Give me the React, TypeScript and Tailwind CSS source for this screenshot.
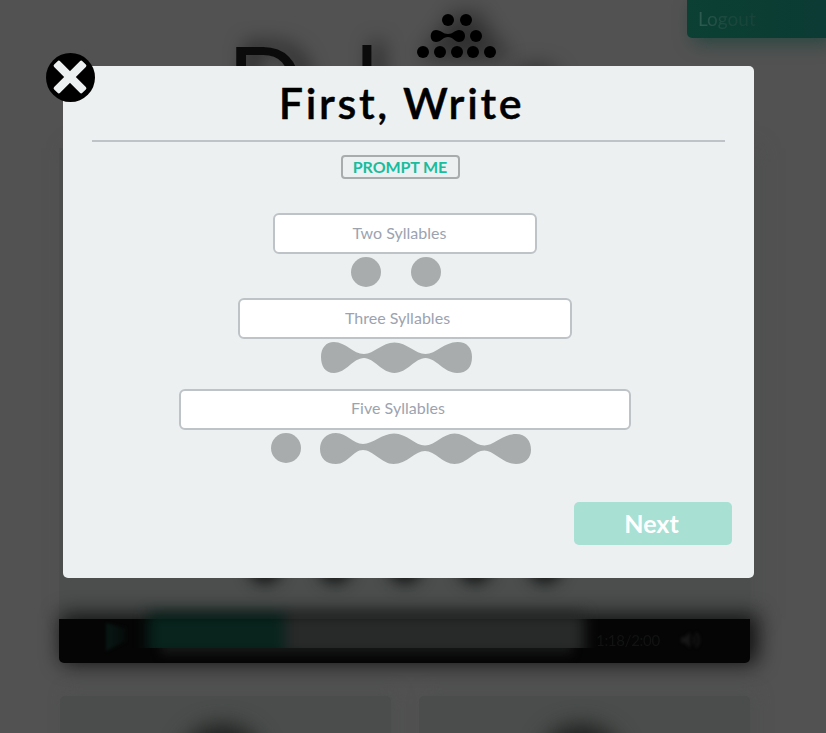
import React from "react";

const field =
  "block h-[41px] rounded-md border-2 border-[#bdc3c7] bg-white text-center text-base tracking-[0.02px] text-gray-700 placeholder:text-[#9ca3af] placeholder:opacity-100 focus:outline-none";

function SyllableMark() {
  return (
    <svg className="block shrink-0 overflow-visible" width="130" height="110" viewBox="0 0 130 110">
      <defs>
        <filter id="markBlur" x="-60%" y="-60%" width="220%" height="220%">
          <feGaussianBlur stdDeviation="11" />
        </filter>
        <g id="mark">
          <circle cx="58" cy="20" r="6" />
          <circle cx="76" cy="20" r="6" />
          <circle cx="86" cy="36" r="6" />
          <path d="M46 30c5 0 7 4 12 4s7-4 11-4c8 0 8 12 0 12-4 0-6-5-11-5s-7 5-12 5c-7 0-7-12 0-12z" />
          <circle cx="33" cy="52" r="6" />
          <circle cx="50" cy="52" r="6" />
          <circle cx="67" cy="52" r="6" />
          <circle cx="83" cy="52" r="6" />
          <circle cx="100" cy="52" r="6" />
        </g>
      </defs>
      <use href="#mark" x="9" y="0" filter="url(#markBlur)" />
      <use href="#mark" />
    </svg>
  );
}

function Player() {
  return (
    <div className="relative ml-[59px] h-[44px] w-[691px] shrink-0 rounded-b-[5px] bg-[#050505] shadow-[5px_-2px_20px_3px_rgba(8,8,8,0.85)]">
      <div className="flex h-[29px] items-start">
        <svg className="ml-[47px] mt-[4px] shrink-0 blur-[1.5px]" width="20" height="28">
          <defs>
            <linearGradient id="playFade" x1="0" x2="1">
              <stop offset="0" stopColor="#071713" />
              <stop offset="1" stopColor="#060a09" />
            </linearGradient>
          </defs>
          <path d="M0 0L20 5V18L0 28Z" fill="url(#playFade)" />
        </svg>
        <div className="ml-[22px] h-[29px] w-[436px] shrink-0 [clip-path:inset(-24px_-20px_0_-20px)]">
          <div className="mt-[-6px] flex h-[44px] w-full bg-[#282929] blur-[7px]">
            <div className="h-[44px] w-[137px] bg-[#08241d]" />
          </div>
        </div>
        <span className="ml-[12px] mt-[12px] whitespace-nowrap text-[15px] leading-[18px] tracking-[-0.3px] text-[#111313] blur-[0.5px]">
          1:18/2:00
        </span>
        <svg className="ml-5 mt-[11px] shrink-0 blur-[1.5px]" width="24" height="20" viewBox="0 0 24 20" fill="none" stroke="#161616" strokeWidth="2">
          <path d="M1 7h4l5-5v16l-5-5H1z" fill="#161616" stroke="none" />
          <path d="M13 6q3 4 0 8M16 3q6 7 0 14" />
        </svg>
      </div>
      <div className="ml-[90px] mr-[166px] h-[15px] overflow-hidden">
        <div className="mx-3 mt-[-8px] h-[14px] bg-[#161717] blur-[5px]" />
      </div>
    </div>
  );
}

function Card() {
  return (
    <div className="flex h-[80px] w-[331px] shrink-0 justify-center rounded-[5px] bg-[#4a4d4b] pr-[8px] pt-[29px] shadow-[6px_-4px_16px_rgba(75,78,77,0.6)]">
      <div className="h-20 w-[84px] shrink-0 rounded-full bg-[#1c1e1d] blur-[11px]" />
    </div>
  );
}

function Backdrop() {
  return (
    <div className="flex h-[733px] flex-col overflow-hidden bg-[#525252]">
      <header className="flex h-[148px] shrink-0 items-start">
        <div className="flex w-[390px] shrink-0 justify-start pl-[227px] text-[101px] leading-[60px] text-[#0b0b0b] [text-shadow:10px_-3px_20px_rgba(0,0,0,0.7)]">
          <span className="mt-[50px] w-[128px]">D</span>
          <span className="mt-[50px]">l</span>
        </div>
        <SyllableMark />
        <div className="mt-[72px] h-4 w-8 rounded-full bg-[#111] shadow-[0_0_22px_6px_rgba(0,0,0,0.4)]" />
        <div className="ml-auto h-[38px] w-[139px] rounded-bl-[5px] bg-gradient-to-r from-[#0c4033] to-[#0b3b34] pl-[11px] pt-[7px] text-[19px] leading-6 shadow-[6px_5px_18px_rgba(12,64,51,0.6)]">
          <span className="bg-gradient-to-r from-[#2f5c51] via-[#1b483d] to-[#174339] bg-clip-text text-transparent">Logout</span>
        </div>
      </header>
      <section className="ml-[59px] flex h-[471px] w-[691px] shrink-0 items-end justify-center gap-[38px] bg-[#4b4e4d] pb-[36px] shadow-[9px_0_18px_rgba(75,78,77,0.6)]">
        {[0, 1, 2, 3, 4].map((n) => (
          <div key={n} className="h-8 w-8 rounded-full bg-[#0d0f0e] blur-[8px]" />
        ))}
      </section>
      <Player />
      <div className="ml-[60px] mt-[33px] flex gap-[28px]">
        <Card />
        <Card />
      </div>
    </div>
  );
}

function TwoSyllables() {
  return (
    <svg className="ml-[288px] block" width="90" height="44" fill="#a8acad">
      <circle cx="15" cy="18" r="15" />
      <circle cx="75" cy="18" r="15" />
    </svg>
  );
}

function ThreeSyllables() {
  return (
    <svg className="ml-[257px] block" width="153" height="50" viewBox="320 339 153 50" fill="#a8acad">
      <path d="M334 342C346 342 353 354 364 354C374 354 382 342.500 394.500 342.500C407 342.500 415 354 425.500 354C436 354 444 342 457.500 342C467 342 472 348 472 357C472 367 467 373 457 373C444 373 436 358 425.500 358C415 358 407 373 394.500 373C382 373 374 358 364 358C353 358 346 373 334 373C325 373 321 366 321 357C321 348 326 342 334 342Z" />
    </svg>
  );
}

function FiveSyllables() {
  return (
    <svg className="ml-[207px] block" width="263" height="50" viewBox="270 430 263 50" fill="#a8acad">
      <circle cx="286" cy="448" r="15" />
      <path d="M336 433C347 433 353 444 363 444C373 444 382 433.500 394 433.500C407 433.500 415 445.500 425 445.500C435 445.500 443 433.500 454.500 433.500C467 433.500 474 445.500 484.500 445.500C494 445.500 503 434 516 434C526 434 531 441 531 450C531 458 525 464 516 464C503 464 494 450.500 484.500 450.500C474 450.500 467 464 454.500 464C443 464 435 451 425 451C415 451 407 464 393.500 464C382 464 373 450 363 450C353 450 348 464 336 464C326 464 320 458 320 449C320 440 326 433 336 433Z" />
    </svg>
  );
}

function CloseIcon() {
  return (
    <svg className="block" width="49" height="49" viewBox="0 0 49 49">
      <circle cx="24.500" cy="24.500" r="24.500" />
      <g fill="#ecf0f1" transform="rotate(45 24 24)">
        <rect x="4" y="19.800" width="40" height="8.400" rx="1.800" />
        <rect x="19.800" y="4" width="8.400" height="40" rx="1.800" />
      </g>
    </svg>
  );
}

export default function App() {
  return (
    <main className="relative h-[733px] w-[826px] overflow-hidden font-['Lato',sans-serif]">
      <Backdrop />
      <div role="dialog" className="absolute left-[63px] top-[66px] h-[512px] w-[691px] rounded-[5px] bg-[#ecf0f1]">
        <button aria-label="Close" className="absolute -left-[17px] -top-[13px]">
          <CloseIcon />
        </button>
        <h1 className="h-[74px] pr-[14px] text-center text-[43px] font-semibold leading-[74px] tracking-[2.7px] text-black [-webkit-text-stroke:0.4px_black]">
          First, Write
        </h1>
        <hr className="mx-[29px] border-t-2 border-[#bdc3c7]" />
        <button className="ml-[278px] mt-[13px] block h-6 w-[119px] rounded border-2 border-[#a8acad] pr-px text-base font-bold leading-5 tracking-[-0.1px] text-[#1abc9c]">
          PROMPT ME
        </button>
        <input className={`${field} ml-[210px] mt-[34px] w-[264px] pb-[2px] pr-[11px]`} placeholder="Two Syllables" />
        <TwoSyllables />
        <input className={`${field} ml-[175px] w-[334px] pb-[2px] pr-[15px]`} placeholder="Three Syllables" />
        <ThreeSyllables />
        <input className={`${field} ml-[116px] w-[452px] pb-[4px] pr-[14px]`} placeholder="Five Syllables" />
        <FiveSyllables />
        <button className="ml-auto mr-[22px] mt-[22px] block h-[43px] w-[158px] rounded-[5px] bg-[#a8e0d4] pr-[3px] text-[25px] font-bold leading-[43px] text-white">
          Next
        </button>
      </div>
    </main>
  );
}
